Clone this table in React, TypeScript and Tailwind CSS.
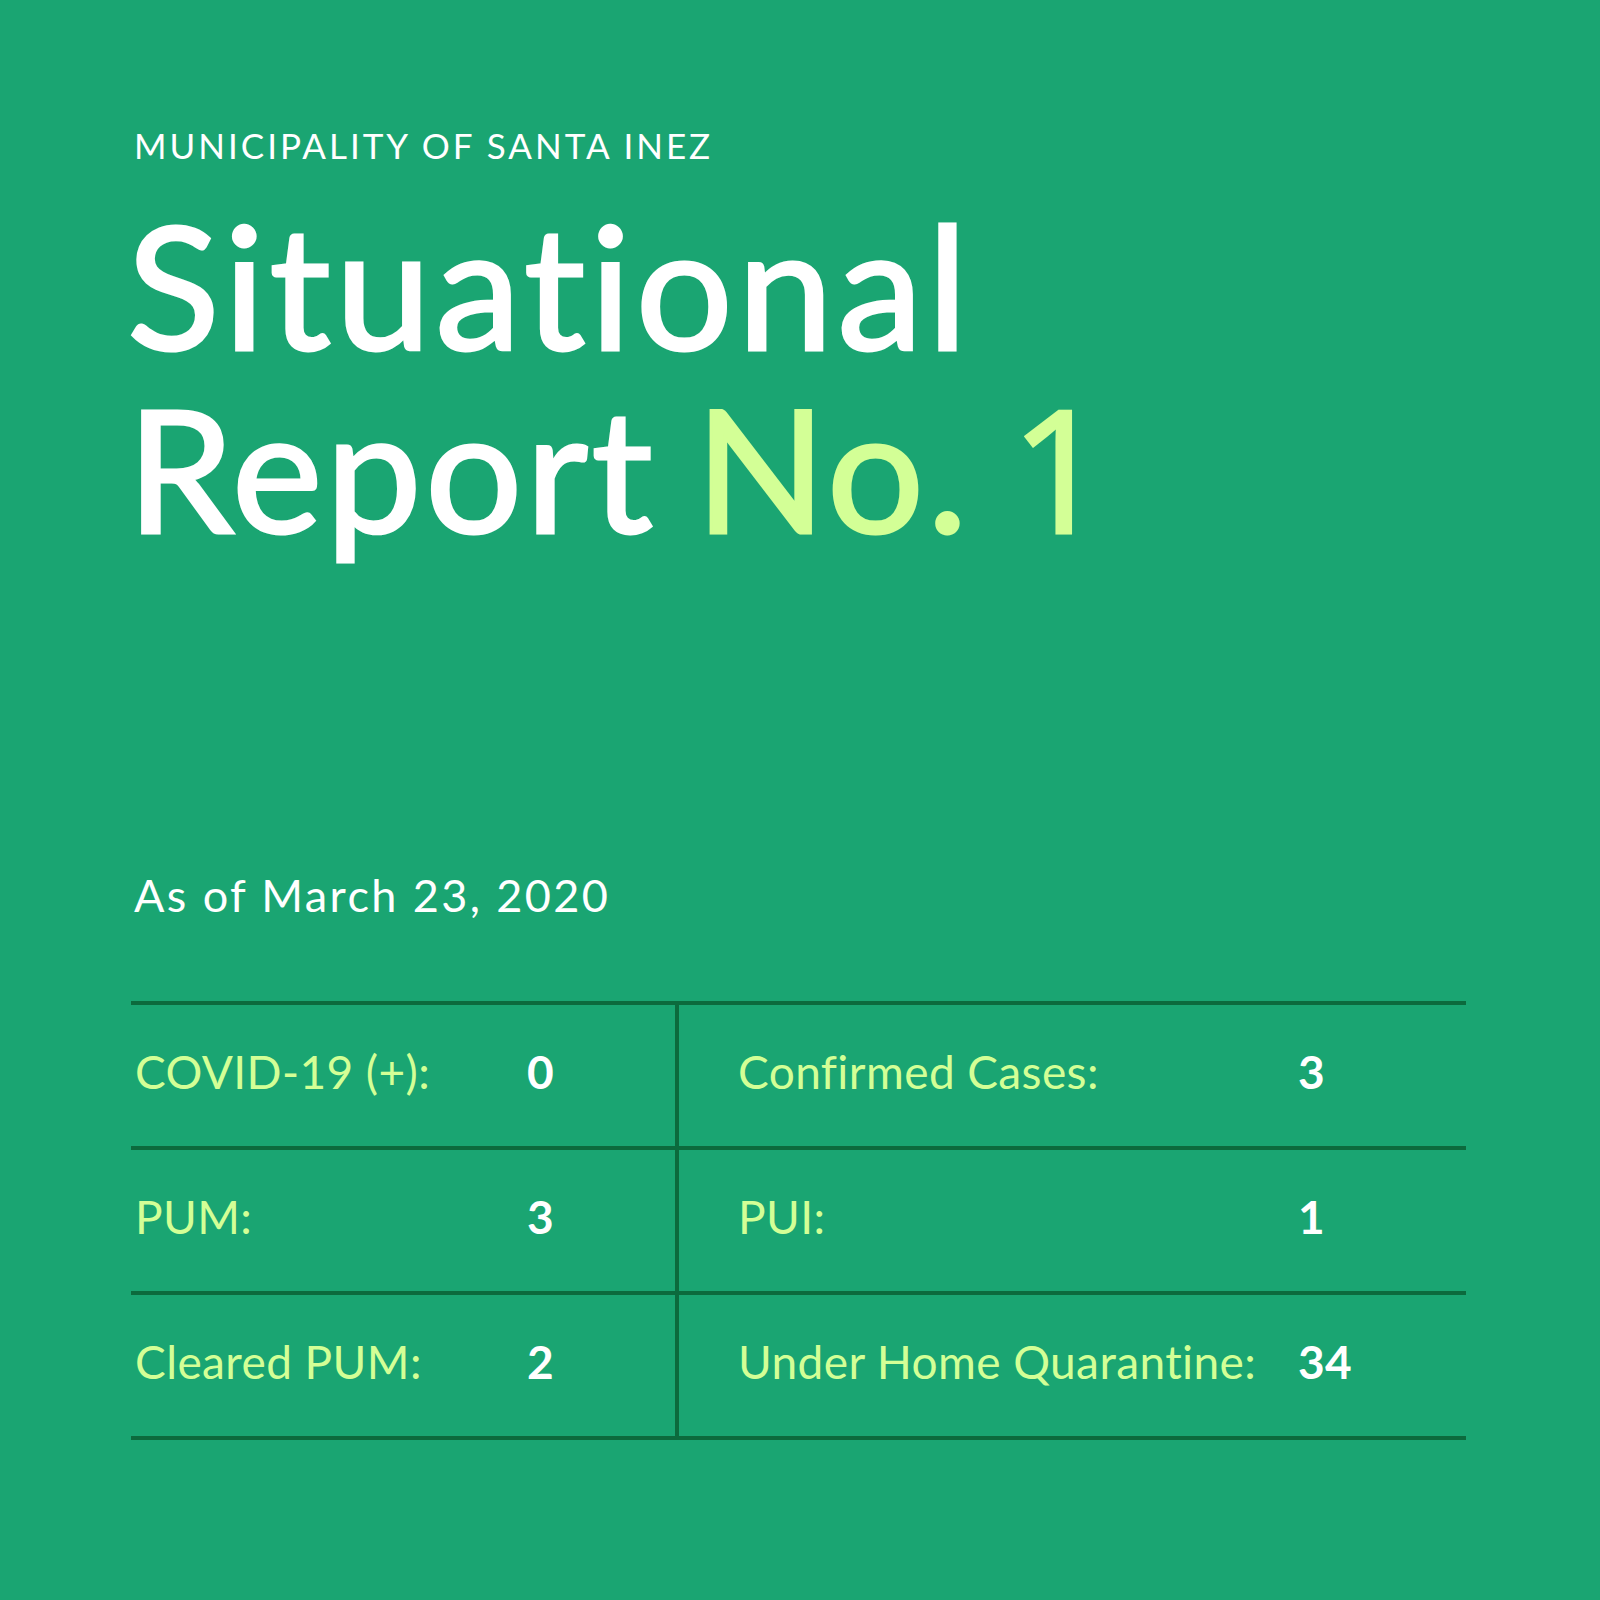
import React from "react";

const rows: [string, string, string, string][] = [
  ["COVID-19 (+):", "0", "Confirmed Cases:", "3"],
  ["PUM:", "3", "PUI:", "1"],
  ["Cleared PUM:", "2", "Under Home Quarantine:", "34"],
];

export default function App() {
  return (
    <div
      className="w-[1600px] h-[1600px] bg-[#1aa572] pl-[131px] pr-[134px] pt-[128px] text-white"
      style={{ fontFamily: "Lato, 'Open Sans', sans-serif" }}
    >
      <p className="text-[35px] leading-[35px] tracking-[3px] pl-[3px]">MUNICIPALITY OF SANTA INEZ</p>
      <h1 className="mt-[29px] -ml-[4px] text-[171px] leading-[183px] font-normal tracking-[3.5px] [word-spacing:-8px] [-webkit-text-stroke:3px_currentcolor]">
        <div className="tracking-[4.7px]">Situational</div>
        <div>
          Report{" "}
          <span className="text-[#d3ff96]">
            No.{" "}
            <span style={{ fontFamily: "'Open Sans', sans-serif" }}>1</span>
          </span>
        </div>
      </h1>
      <p className="mt-[315px] text-[45px] leading-[45px] tracking-[2.4px] pl-[3px]">As of March 23, 2020</p>
      <div className="mt-[83px] border-t-4 border-[#0c6a3d]">
        {rows.map((r, i) => (
          <div key={i} className="flex h-[145px] border-b-4 border-[#0c6a3d]">
            <div className="w-[548px] border-r-4 border-[#0c6a3d] pl-[4px] pb-2 grid grid-cols-[392px_1fr] items-center text-[46px] leading-[46px] tracking-[0.4px]">
              <span className="text-[#d3ff96]">{r[0]}</span>
              <span className="font-bold">{r[1]}</span>
            </div>
            <div className="flex-1 pl-[59px] pb-2 grid grid-cols-[560px_1fr] items-center text-[46px] leading-[46px] tracking-[0.4px]">
              <span className="text-[#d3ff96]">{r[2]}</span>
              <span className="font-bold">{r[3]}</span>
            </div>
          </div>
        ))}
      </div>
    </div>
  );
}
